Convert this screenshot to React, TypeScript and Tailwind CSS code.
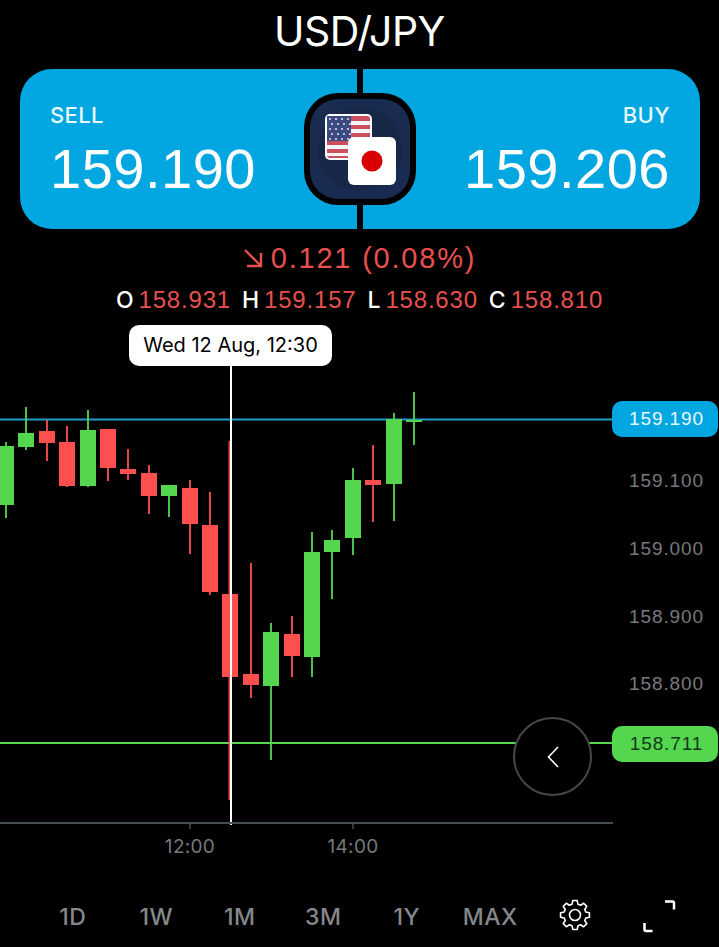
const GREEN = "#55d64f";
const RED = "#fe4f4f";

// x center, wick top, wick bottom, body top, body bottom (page y)
const candles: [number, number, number, number, number, string][] = [
  [6, 442, 518, 446, 505, GREEN],
  [26, 407, 450, 433, 447, GREEN],
  [47, 420, 461, 431, 443, RED],
  [67, 426, 487, 442, 486, RED],
  [88, 410, 487, 430, 486, GREEN],
  [108, 429, 481, 429, 468, RED],
  [128, 449, 480, 469, 474, RED],
  [149, 465, 514, 473, 496, RED],
  [169, 485, 517, 485, 496, GREEN],
  [190, 480, 554, 488, 524, RED],
  [210, 492, 595, 525, 592, RED],
  [229.5, 441, 800, 594, 677, RED],
  [251, 563, 698, 674, 685, RED],
  [271, 623, 760, 632, 686, GREEN],
  [292, 616, 677, 634, 656, RED],
  [312, 532, 677, 552, 657, GREEN],
  [332, 530, 599, 540, 552, GREEN],
  [353, 468, 555, 480, 538, GREEN],
  [373, 445, 522, 480, 485, RED],
  [394, 413, 521, 419, 484, GREEN],
  [414, 392, 445, 420, 422, GREEN],
];

const axisPrices = [
  { label: "159.100", y: 481 },
  { label: "159.000", y: 549 },
  { label: "158.900", y: 617 },
  { label: "158.800", y: 684 },
];

const ohlc = [
  ["O", "158.931"],
  ["H", "159.157"],
  ["L", "158.630"],
  ["C", "158.810"],
];

const ranges = ["1D", "1W", "1M", "3M", "1Y", "MAX"];

// 8 tooth gear outline around 17,17
function gearPath() {
  const pts: string[] = [];
  for (let i = 0; i < 8; i++) {
    const a = (i * Math.PI) / 4 - Math.PI / 2;
    const offs: [number, number][] = [
      [-0.27, 11.2],
      [-0.15, 14.6],
      [0.15, 14.6],
      [0.27, 11.2],
    ];
    offs.forEach(([d, r]) => {
      pts.push(`${(17 + r * Math.cos(a + d)).toFixed(2)} ${(17 + r * Math.sin(a + d)).toFixed(2)}`);
    });
  }
  return `M${pts.join(" L")} Z`;
}

function Flags() {
  return (
    <svg width="72" height="72" viewBox="0 0 72 72" className="absolute left-[15px] top-[15px]">
      <g>
        <rect x="0" y="0" width="47" height="46" rx="5" fill="#fff" />
        <rect x="2" y="2" width="43" height="42" rx="3" fill="#c9505c" />
        <rect x="2" y="7" width="43" height="4" fill="#f4f4f4" />
        <rect x="2" y="15" width="43" height="4" fill="#f4f4f4" />
        <rect x="2" y="23" width="43" height="4" fill="#d8d8d8" />
        <rect x="2" y="31" width="43" height="4" fill="#f4f4f4" />
        <rect x="2" y="39" width="43" height="3" fill="#f4f4f4" />
        <rect x="2" y="2" width="24" height="25" fill="#3c4a82" />
        {[0, 1, 2, 3, 4].map((r) =>
          [0, 1, 2, 3].map((c) => (
            <circle key={`${r}-${c}`} cx={5 + c * 6 + (r % 2) * 2} cy={5 + r * 5} r="1" fill="#e8e8f0" />
          ))
        )}
      </g>
      <rect x="23" y="23" width="48" height="48" rx="6" fill="#fff" />
      <circle cx="47" cy="47" r="10.5" fill="#d80000" />
    </svg>
  );
}

export default function App() {
  return (
    <div className="w-[719px] h-[947px] bg-black text-white overflow-hidden flex flex-col font-['Inter',sans-serif]">
      <h1 className="h-[69px] pt-[7px] text-center text-[41px] leading-[48px] font-normal tracking-[-0.5px]">USD/JPY</h1>

      <div className="relative ml-5 w-[680px] h-40 flex gap-1.5">
        <div className="flex-1 bg-[#02a6e0] rounded-l-[32px] pl-[30px] pt-[33px]">
          <div className="text-[22px] leading-[26px] font-medium tracking-[0.4px] text-[#e8f8ff]">SELL</div>
          <div className="mt-[11px] font-['Liberation_Sans',sans-serif] text-[56px] leading-[60px] tracking-[0.5px]">159.190</div>
        </div>
        <div className="flex-1 bg-[#02a6e0] rounded-r-[32px] pr-[30px] pt-[33px] text-right">
          <div className="text-[22px] leading-[26px] font-medium tracking-[0.4px] text-[#e8f8ff]">BUY</div>
          <div className="mt-[11px] font-['Liberation_Sans',sans-serif] text-[56px] leading-[60px] tracking-[0.5px]">159.206</div>
        </div>
        <div className="absolute left-[284px] top-6 w-28 h-28 rounded-[34px] bg-black p-1.5">
          <div className="relative w-full h-full rounded-[28px] bg-[#1a2b52] overflow-hidden">
            <div className="absolute left-[8px] top-[8px] w-[84px] h-[84px] rounded-full bg-[#182747]" />
            <Flags />
          </div>
        </div>
      </div>

      <div className="mt-[12px] h-[34px] flex items-center justify-center gap-[8px] text-[#e8504f] font-['Liberation_Sans',sans-serif] text-[29px] leading-[34px] tracking-[1.8px]">
        <svg width="20" height="20" viewBox="0 0 20 20" fill="none" stroke="#e8504f" strokeWidth="2.4">
          <path d="M2 2 L18 18 M18 5 V18 H4" />
        </svg>
        <span>0.121 (0.08%)</span>
      </div>

      <div className="mt-[10px] h-[30px] flex items-center justify-center gap-[11px] font-['Liberation_Sans',sans-serif] text-[24px] leading-[30px] tracking-[0.8px]">
        {ohlc.map(([k, v]) => (
          <div key={k} className="flex gap-[5px]">
            <span className="font-['Inter',sans-serif] text-[23px] font-medium tracking-normal text-white">{k}</span>
            <span className="text-[#e8504f]">{v}</span>
          </div>
        ))}
      </div>

      <div className="relative mt-[5px] h-[525px]">
        <svg width="719" height="525" viewBox="0 320 719 525" className="absolute left-0 top-0">
          <line x1="0" y1="419.5" x2="612" y2="419.5" stroke="#1f9ccc" strokeWidth="2" />
          <line x1="0" y1="743" x2="612" y2="743" stroke={GREEN} strokeWidth="2" />
          {candles.map(([x, wt, wb, bt, bb, color]) => (
            <g key={x} fill={color}>
              <rect x={x - 1} y={wt} width="2" height={wb - wt} opacity="0.9" />
              <rect x={Math.ceil(x) - 8} y={bt} width="16" height={bb - bt} />
            </g>
          ))}
          <line x1="231" y1="366" x2="231" y2="825" stroke="#fff" strokeWidth="2" />
          <line x1="0" y1="823" x2="613" y2="823" stroke="#484d52" strokeWidth="2" />
          <line x1="190" y1="823" x2="190" y2="829" stroke="#484d52" strokeWidth="1.5" />
          <line x1="353" y1="823" x2="353" y2="829" stroke="#484d52" strokeWidth="1.5" />
        </svg>

        <div className="absolute left-[129px] top-[5px] h-[41px] w-[203px] rounded-[10px] bg-white text-black text-[20px] leading-[41px] text-center">
          Wed 12 Aug, 12:30
        </div>

        <div className="absolute left-[612px] top-[81px] w-[106px] h-9 pl-[3px] rounded-[10px] bg-[#02a6e0] text-center font-['Liberation_Sans',sans-serif] text-[19px] leading-9 tracking-[0.9px] text-[#e8f8ff]">
          159.190
        </div>
        {axisPrices.map((p) => (
          <div key={p.label} className="absolute left-[612px] w-[106px] h-7 pl-[3px] text-center font-['Liberation_Sans',sans-serif] text-[19px] leading-7 tracking-[0.9px] text-[#77797b]" style={{ top: p.y - 334 }}>
            {p.label}
          </div>
        ))}
        <div className="absolute left-[612px] top-[406px] w-[106px] h-9 pl-[3px] rounded-[10px] bg-[#55d64f] text-center font-['Liberation_Sans',sans-serif] text-[19px] leading-9 tracking-[0.9px] text-[#14381a]">
          158.711
        </div>

        <div className="absolute left-[513px] top-[397px] w-[79px] h-[79px] rounded-full border-2 border-[#44484c] bg-black flex items-center justify-center">
          <svg width="14" height="24" viewBox="0 0 14 24" fill="none" stroke="#fff" strokeWidth="1.6">
            <path d="M12 2 L2.5 12 L12 22" />
          </svg>
        </div>

        <span className="absolute left-[140px] top-[515px] w-[100px] text-center text-[19px] leading-6 tracking-[0.3px] text-[#77797b]">12:00</span>
        <span className="absolute left-[303px] top-[515px] w-[100px] text-center text-[19px] leading-6 tracking-[0.3px] text-[#77797b]">14:00</span>
      </div>

      <div className="flex-1 flex items-start pl-[31px] pt-[58px]">
        {ranges.map((r) => (
          <div key={r} className="w-[83.5px] text-center text-[23px] leading-7 font-medium tracking-[0.5px] text-[#85888a]">{r}</div>
        ))}
        <svg width="34" height="34" viewBox="0 0 34 34" fill="none" stroke="#fff" strokeWidth="1.6" strokeLinejoin="round" className="ml-[26px] mt-[-5px]">
          <path d={gearPath()} />
          <circle cx="17" cy="17" r="5.5" />
        </svg>
        <svg width="33" height="33" viewBox="0 0 33 33" fill="none" stroke="#fff" strokeWidth="2.5" className="ml-[51px] mt-[-3px]">
          <path d="M22 1.5 H29.5 Q31 1.5 31 3 V9.5 M1.5 23 V29.5 Q1.5 31 3 31 H9.5" />
        </svg>
      </div>
    </div>
  );
}
